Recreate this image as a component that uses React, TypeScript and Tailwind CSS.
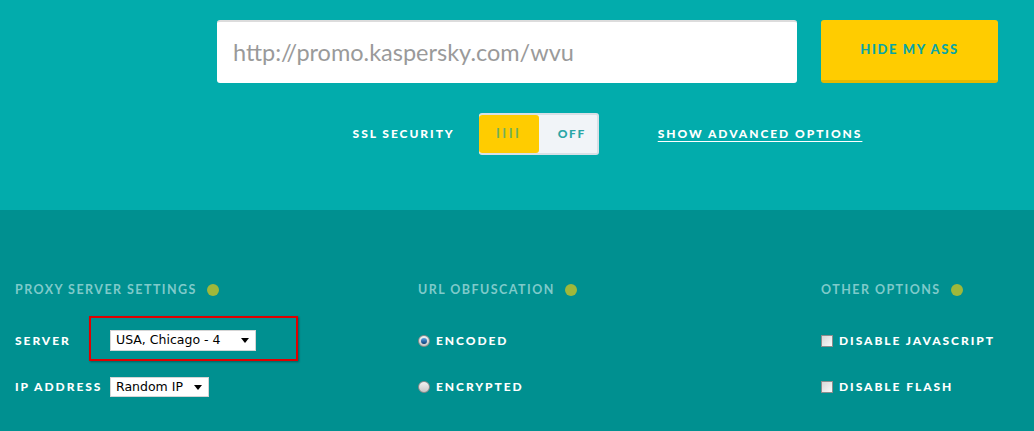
const label = "font-['Lato',sans-serif] font-black uppercase text-white text-[12px] tracking-[1.95px]";
const header =
  "font-['Lato',sans-serif] font-bold uppercase text-[12.5px] tracking-[1.45px] text-[#7fcaca] leading-[20px]";

function Dot() {
  return <span className="ml-[10px] inline-block h-[12px] w-[12px] rounded-full bg-[#9fb83a]" />;
}

function FakeSelect({ value, width, height }: { value: string; width: string; height: string }) {
  return (
    <div
      className={`flex items-center justify-between border border-[#d5d5d5] bg-white pl-[5px] pr-[6px] font-['DejaVu_Sans',sans-serif] text-[12.5px] text-black ${width} ${height}`}
    >
      <span>{value}</span>
      <span className="h-0 w-0 border-x-[4px] border-t-[5px] border-x-transparent border-t-black" />
    </div>
  );
}

function Radio({ checked }: { checked?: boolean }) {
  return (
    <span className="flex h-[12px] w-[12px] items-center justify-center rounded-full border border-[#8a8a8a] bg-gradient-to-b from-[#f2f2f2] to-[#c8c8c8]">
      {checked && <span className="h-[6px] w-[6px] rounded-full bg-gradient-to-b from-[#5aa8e8] to-[#0c3e78]" />}
    </span>
  );
}

function Check() {
  return (
    <span className="inline-block h-[12px] w-[12px] border border-[#8d8d8d] bg-gradient-to-br from-[#d8d8d8] to-[#fafafa]" />
  );
}

export default function App() {
  return (
    <div className="w-[1034px] h-[431px] overflow-hidden">
      <section className="h-[210px] bg-[#02acac] pt-[20px]">
        <div className="ml-[217px] w-[781px]">
          <div className="flex gap-[24px]">
            <div className="flex h-[63px] w-[580px] items-center rounded-[3px] border-t-2 border-[#dcdcdc] bg-white pl-[16px] font-['Lato',sans-serif] text-[23.5px] text-[#9a9a9a]">
              http://promo.kaspersky.com/wvu
            </div>
            <button
              type="button"
              className="h-[63px] w-[177px] rounded-[3px] border-b-[3px] border-[#e4b900] bg-[#ffcc00] font-['Lato',sans-serif] text-[13px] font-black uppercase tracking-[1.6px] text-[#08a6a6]"
            >
              Hide my ass
            </button>
          </div>
          <div className="mt-[30px] flex items-center justify-center">
            <span className={label}>SSL Security</span>
            <div className="ml-[24px] flex h-[42px] w-[120px] overflow-hidden rounded-[3px] border-y-2 border-r-2 border-[#d8e0e6] bg-[#f1f4f8]">
              <div className="flex w-[60px] items-center justify-center rounded-[3px] bg-[#ffcc00] font-['Lato',sans-serif] text-[13px] font-bold tracking-[2.5px] text-[#72b05c]">
                IIII
              </div>
              <div className="flex flex-1 items-center justify-center pl-[8px] font-['Lato',sans-serif] text-[12px] font-black tracking-[1.6px] text-[#2aa6a6]">
                OFF
              </div>
            </div>
            <a className={`${label} ml-[59px] underline underline-offset-[3px]`}>Show advanced options</a>
          </div>
        </div>
      </section>
      <section className="h-[221px] bg-[#009090] pl-[15px] pt-[70px]">
        <div className="grid grid-cols-[403px_403px_1fr]">
          <div>
            <div className={`${header} flex items-center`}>
              Proxy server settings
              <Dot />
            </div>
            <div className="mt-[30px] flex h-[21px] items-center">
              <span className={`${label} w-[95px]`}>Server</span>
              <div className="relative">
                <FakeSelect value="USA, Chicago - 4" width="w-[146px]" height="h-[21px]" />
                <div className="absolute -left-[21px] -top-[14px] h-[45px] w-[209px] border-2 border-[#e00000] shadow-[1px_1px_2px_rgba(0,0,0,0.35)]" />
              </div>
            </div>
            <div className="mt-[26px] flex h-[20px] items-center">
              <span className={`${label} w-[95px]`}>IP Address</span>
              <FakeSelect value="Random IP" width="w-[99px]" height="h-[20px]" />
            </div>
          </div>
          <div>
            <div className={`${header} flex items-center`}>
              URL Obfuscation
              <Dot />
            </div>
            <div className="mt-[30px] flex h-[21px] items-center gap-[6px]">
              <Radio checked />
              <span className={label}>Encoded</span>
            </div>
            <div className="mt-[26px] flex h-[20px] items-center gap-[6px]">
              <Radio />
              <span className={label}>Encrypted</span>
            </div>
          </div>
          <div>
            <div className={`${header} flex items-center`}>
              Other options
              <Dot />
            </div>
            <div className="mt-[30px] flex h-[21px] items-center gap-[6px]">
              <Check />
              <span className={label}>Disable Javascript</span>
            </div>
            <div className="mt-[26px] flex h-[20px] items-center gap-[6px]">
              <Check />
              <span className={label}>Disable Flash</span>
            </div>
          </div>
        </div>
      </section>
    </div>
  );
}
